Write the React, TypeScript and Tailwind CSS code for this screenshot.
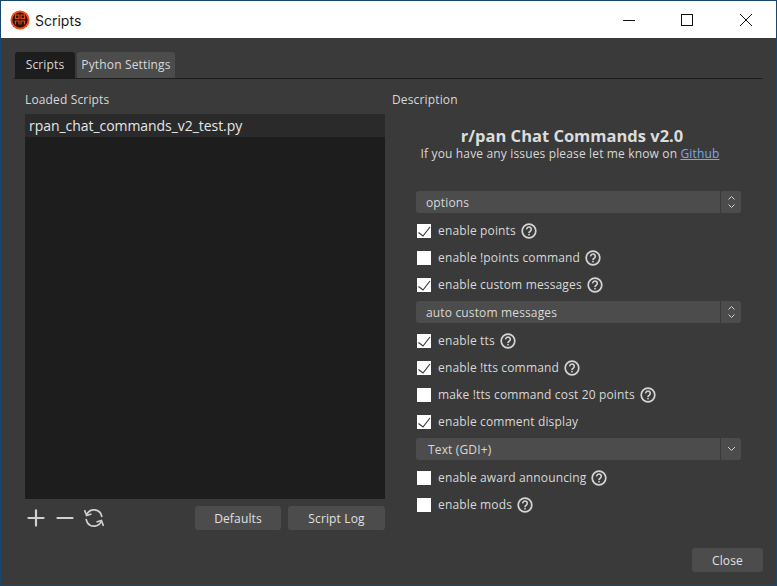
import { Minus, Plus } from 'lucide-react';

const ui = "font-['Open_Sans','Noto_Sans',sans-serif]";

function Help() {
  return (
    <svg width="16" height="16" viewBox="0 0 16 16" fill="none" className="shrink-0 ml-[5px]">
      <circle cx="8" cy="8" r="6.8" stroke="#d4d4d4" strokeWidth="1.7" />
      <path d="M5.7 6.4a2.3 2.3 0 1 1 3.6 1.8c-.9.5-1.3.9-1.3 1.7" stroke="#d4d4d4" strokeWidth="1.6" />
      <rect x="7.2" y="10.8" width="1.6" height="1.6" fill="#d4d4d4" />
    </svg>
  );
}

function Check({ label, checked, help = true }: { label: string; checked?: boolean; help?: boolean }) {
  return (
    <div className="flex items-center h-[27px] pl-[1px]">
      <div className="w-[14px] h-[14px] bg-white shrink-0">
        {checked && (
          <svg width="14" height="14" viewBox="0 0 14 14" fill="none">
            <path d="M1.5 8.5 6 12 13 3" stroke="#3a3a3a" strokeWidth="1.2" />
          </svg>
        )}
      </div>
      <span className="ml-[7px] text-[12px] tracking-[0.15px] text-[#d8d8d8]">{label}</span>
      {help && <Help />}
    </div>
  );
}

function Select({ label, single, className = '' }: { label: string; single?: boolean; className?: string }) {
  return (
    <div className={`flex h-[22px] rounded-[3px] bg-[#4c4c4c] text-[12px] tracking-[0.15px] text-[#d8d8d8] ${className}`}>
      <div className={`flex-1 flex items-center pt-[1px] ${single ? 'pl-[12px]' : 'pl-[10px]'}`}>{label}</div>
      <div className="w-[21px] border-l border-[#3a3a3a] flex items-center justify-center">
        <svg width="9" height="14" viewBox="0 0 9 14" fill="none" stroke="#d0d0d0" strokeWidth="1">
          {single ? <path d="M1 5 4.5 8.5 8 5" /> : <path d="M1.5 4.5 4.5 1.5 7.5 4.5M1.5 9.5 4.5 12.5 7.5 9.5" />}
        </svg>
      </div>
    </div>
  );
}

export default function App() {
  return (
    <div className={`${ui} w-[777px] h-[586px] flex flex-col bg-[#3a3a3a] border border-[#17466e] overflow-hidden`}>
      {/* title bar */}
      <div className="h-[37px] bg-white flex items-center shrink-0">
        <svg width="20" height="20" viewBox="0 0 20 20" className="ml-[9px]">
          <circle cx="10" cy="10" r="9.5" fill="#f04a10" />
          <circle cx="10" cy="10" r="7.6" fill="#2a1208" />
          <path d="M5.5 5h3.5v3.5h-3.5zM11 5h3.5v3.5H11zM5.5 14.5V11h3.5v3.5M11 14.5V11h3.5v3.5" fill="none" stroke="#f04a10" strokeWidth="1.1" />
        </svg>
        <span className="ml-[5px] mt-[1px] text-[14px] text-[#1a1a1a] font-['Inter','Noto_Sans',sans-serif]">Scripts</span>
        <div className="ml-auto flex items-center">
          <svg width="12" height="12" viewBox="0 0 12 12" className="mr-[46px]"><path d="M0 6.5h12" stroke="#111" strokeWidth="1" /></svg>
          <svg width="12" height="12" viewBox="0 0 12 12" fill="none" className="mr-[47px]"><rect x=".5" y=".5" width="11" height="11" stroke="#111" /></svg>
          <svg width="12" height="12" viewBox="0 0 12 12" fill="none" className="mr-[24px]"><path d="M0 0 12 12M12 0 0 12" stroke="#111" /></svg>
        </div>
      </div>

      <div className="flex-1 flex flex-col pt-[14px] pl-[13px] pr-[13px] pb-[13px] min-h-0">
        {/* tabs */}
        <div className="flex items-end gap-[2px] h-[27px] border-b border-[#1e1e1e] text-[12px] tracking-[0.15px] pl-[1px]">
          <div className="w-[60px] h-[26px] bg-[#1d1d1d] rounded-t-[3px] flex items-center justify-center text-[#d8d8d8]">Scripts</div>
          <div className="w-[98px] h-[26px] bg-[#4c4c4c] rounded-t-[3px] flex items-center justify-center text-[#d8d8d8]">Python Settings</div>
        </div>

        <div className="flex-1 flex min-h-0 pl-[11px] mt-[12px]">
          {/* left column */}
          <div className="w-[360px] flex flex-col">
            <div className="h-[17px] text-[12px] tracking-[0.15px] leading-[17px] text-[#d8d8d8] mb-[6px]">Loaded Scripts</div>
            <div className="h-[385px] bg-[#1d1d1d]">
              <div className="h-[23px] bg-[#2a2a2a] pl-[4px] flex items-center text-[14px] tracking-[-0.05px] text-[#e6e6e6]">rpan_chat_commands_v2_test.py</div>
            </div>
            <div className="flex items-center mt-[7px] h-[24px]">
              <Plus size={26} strokeWidth={2} className="text-[#d0d0d0] -ml-[2px]" />
              <Minus size={26} strokeWidth={2} className="text-[#d0d0d0] ml-[3px]" />
              <svg width="20" height="20" viewBox="0 0 20 20" fill="none" stroke="#d0d0d0" strokeWidth="1.7" className="ml-[6px]">
                <path d="M2.6 7A8 8 0 0 1 16.6 5.2L18 9" />
                <path d="M17.4 13A8 8 0 0 1 3.4 14.8L2 11" />
                <path d="M0.5 2 2.6 7.5 7.5 6M19.5 18 17.4 12.5 12.5 14" />
              </svg>
              <div className="ml-auto flex gap-[7px] text-[12px] tracking-[0.15px] text-[#e0e0e0]">
                <div className="w-[86px] h-[24px] pt-[1px] rounded-[3px] bg-[#4c4c4c] flex items-center justify-center">Defaults</div>
                <div className="w-[97px] h-[24px] pt-[1px] rounded-[3px] bg-[#4c4c4c] flex items-center justify-center">Script Log</div>
              </div>
            </div>
          </div>

          {/* right column */}
          <div className="ml-[7px] w-[371px] flex flex-col">
            <div className="h-[17px] text-[12px] tracking-[0.15px] leading-[17px] text-[#d8d8d8]">Description</div>
            <div className="w-[356px] text-center mt-[18px]">
              <div className="pl-[4px] text-[16.5px] leading-[20px] font-bold text-[#dcdcdc]">r/pan Chat Commands v2.0</div>
              <div className="text-[12px] tracking-[0.15px] leading-[16px] text-[#d8d8d8]">
                If you have any issues please let me know on <span className="text-[#7aa6ee] underline">Github</span>
              </div>
            </div>
            <div className="ml-[24px] w-[325px] mt-[29px] flex flex-col">
              <Select label="options" />
              <div className="mt-[4px]">
                <Check label="enable points" checked />
                <Check label="enable !points command" />
                <Check label="enable custom messages" checked />
              </div>
              <Select label="auto custom messages" className="mt-[3px]" />
              <div className="mt-[4px]">
                <Check label="enable tts" checked />
                <Check label="enable !tts command" checked />
                <Check label="make !tts command cost 20 points" />
                <Check label="enable comment display" checked help={false} />
              </div>
              <Select label="Text (GDI+)" single className="mt-[3px]" />
              <div className="mt-[4px]">
                <Check label="enable award announcing" />
                <Check label="enable mods" />
              </div>
            </div>
          </div>
        </div>

        <div className="flex justify-end">
          <div className="w-[71px] h-[24px] pt-[1px] rounded-[3px] bg-[#4c4c4c] flex items-center justify-center text-[12px] tracking-[0.15px] text-[#e0e0e0]">Close</div>
        </div>
      </div>
    </div>
  );
}
